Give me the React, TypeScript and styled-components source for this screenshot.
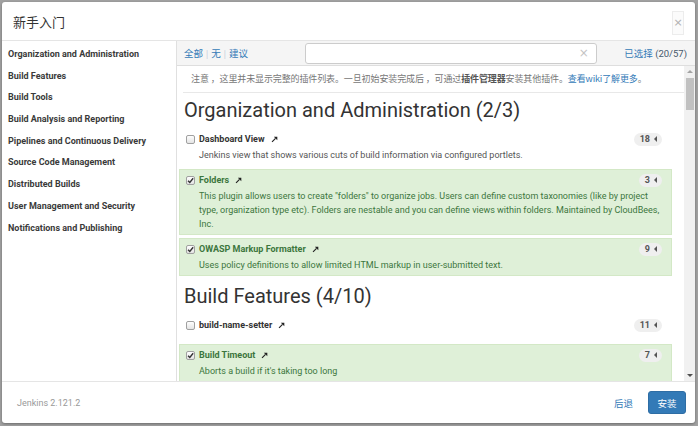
import React from "react";
import styled, { createGlobalStyle } from "styled-components";

const Global = createGlobalStyle`
  html, body { margin: 0; padding: 0; }
  body {
    background: #a2a2a2;
    font-family: Roboto, "Noto Sans CJK SC", sans-serif;
    color: #333;
  }
  * { box-sizing: border-box; }
`;

const Page = styled.div`
  width: 698px;
  height: 426px;
  padding: 2px 3px 3px 2px;
`;

const Modal = styled.div`
  height: 421px;
  background: #fff;
  border-radius: 3px;
  display: flex;
  flex-direction: column;
  overflow: hidden;
  box-shadow: 0 1px 3px rgba(0, 0, 0, 0.35);
`;

const Header = styled.div`
  height: 39px;
  flex: none;
  border-bottom: 1px solid #e5e5e5;
  display: flex;
  align-items: center;
  justify-content: space-between;
  padding: 0 11px 0 11px;
`;

const Title = styled.h4`
  margin: 0;
  font-size: 13px;
  font-weight: 400;
  color: #333;
  font-family: "Noto Sans CJK SC", sans-serif;
`;

const Close = styled.button`
  width: 12px;
  height: 24px;
  padding: 0;
  border: 1px solid #ececec;
  background: #fbfbfb;
  color: #b0b0b0;
  font-size: 11px;
  line-height: 20px;
  font-family: "DejaVu Sans", sans-serif;
  margin-top: 3px;
`;

const Body = styled.div`
  height: 340px;
  flex: none;
  display: flex;
`;

const Sidebar = styled.ul`
  list-style: none;
  margin: 0;
  padding: 3px 0 0 0;
  width: 175px;
  flex: none;
  border-right: 1px solid #e0e0e0;
`;

const NavItem = styled.li`
  height: 21.7px;
  line-height: 21.7px;
  padding-left: 6px;
  font-size: 9px;
  font-weight: 700;
  color: #3a3a3a;
  white-space: nowrap;
`;

const Main = styled.div`
  flex: 1;
  display: flex;
  flex-direction: column;
  min-width: 0;
`;

const Toolbar = styled.div`
  height: 25px;
  flex: none;
  background: #f5f5f5;
  border-bottom: 1px solid #dedede;
  display: flex;
  align-items: center;
  padding: 0 7px;
`;

const Links = styled.div`
  display: flex;
  align-items: center;
  gap: 3px;
  font-size: 9.5px;
  font-family: "Noto Sans CJK SC", sans-serif;
`;

const Link = styled.a`
  color: #337ab7;
  text-decoration: none;
`;

const Sep = styled.span`
  color: #b8c6d4;
  font-size: 8px;
`;

const Search = styled.div`
  margin-left: 57px;
  width: 292px;
  height: 21px;
  border: 1px solid #ccc;
  border-radius: 3px;
  background: #fff;
  display: flex;
  align-items: center;
  justify-content: flex-end;
  padding-right: 7px;
  color: #c4c4c4;
  font-size: 12px;
  font-family: "DejaVu Sans", sans-serif;
`;

const Selected = styled.div`
  margin-left: auto;
  font-size: 9.5px;
  font-family: Roboto, "Noto Sans CJK SC", sans-serif;
  color: #337ab7;
  padding-right: 1px;
`;

const Count = styled.span`
  color: #46596b;
`;

const ScrollWrap = styled.div`
  flex: 1;
  display: flex;
  min-height: 0;
`;

const Content = styled.div`
  flex: 1;
  overflow: hidden;
  min-width: 0;
`;

const Notice = styled.p`
  height: 27px;
  margin: 0 0 0 6px;
  border-bottom: 1px solid #e8e8e8;
  line-height: 26px;
  padding-left: 8px;
  font-size: 9px;
  letter-spacing: -0.12px;
  color: #777;
  font-family: "Noto Sans CJK SC", sans-serif;
  white-space: nowrap;
`;

const Strong = styled.b`
  color: #555;
`;

const Heading = styled.h2`
  margin: 5px 0 6px 7px;
  font-size: 20px;
  line-height: 24px;
  font-weight: 400;
  color: #333;
`;

const Card = styled.div<{ $on?: boolean }>`
  margin: 0 12px 3px 2px;
  padding: 1px 9px 3px 6px;
  border: 1px solid ${(p) => (p.$on ? "#d3e8c6" : "transparent")};
  background: ${(p) => (p.$on ? "#dff0d8" : "transparent")};
  color: ${(p) => (p.$on ? "#3c763d" : "#555")};
  & + h2 {
    margin-top: 8px;
  }
`;

const CardHead = styled.div`
  height: 18px;
  display: flex;
  align-items: center;
`;

const Box = styled.span`
  width: 9px;
  height: 9px;
  border: 1px solid #a0a0a0;
  border-radius: 2px;
  background: linear-gradient(#fefefe, #e4e4e4);
  display: inline-flex;
  align-items: center;
  justify-content: center;
  flex: none;
  margin-right: 4px;
`;

const Name = styled.span<{ $on?: boolean }>`
  font-size: 9px;
  font-weight: 700;
  color: ${(p) => (p.$on ? "#3c763d" : "#333")};
  margin-right: 6px;
`;

const Badge = styled.span`
  margin-left: auto;
  height: 13px;
  padding: 0 5px 0 6px;
  border-radius: 7px;
  background: #efefef;
  display: inline-flex;
  align-items: center;
  gap: 4px;
  font-size: 9px;
  font-weight: 700;
  color: #555;
`;

const Caret = styled.span`
  width: 0;
  height: 0;
  border-top: 3px solid transparent;
  border-bottom: 3px solid transparent;
  border-right: 3px solid #555;
`;

const Desc = styled.div<{ $empty?: boolean }>`
  padding-left: 13px;
  font-size: 9px;
  line-height: 14px;
  min-height: ${(p) => (p.$empty ? "3px" : "14px")};
`;

const ScrollBar = styled.div`
  width: 11px;
  flex: none;
  background: #f1f1f1;
  display: flex;
  flex-direction: column;
  align-items: center;
`;

const Arrow = styled.div<{ $down?: boolean }>`
  height: 11px;
  flex: none;
  display: flex;
  align-items: center;
  justify-content: center;
  &::before {
    content: "";
    width: 0;
    height: 0;
    border-left: 3px solid transparent;
    border-right: 3px solid transparent;
    ${(p) =>
      p.$down
        ? "border-top: 3px solid #505050;"
        : "border-bottom: 3px solid #a3a3a3;"}
  }
`;

const Track = styled.div`
  flex: 1;
  width: 100%;
  display: flex;
  justify-content: center;
`;

const Thumb = styled.div`
  width: 8px;
  height: 32px;
  margin-top: 1px;
  background: #c1c1c1;
`;

const Footer = styled.div`
  flex: 1;
  border-top: 1px solid #e5e5e5;
  display: flex;
  align-items: center;
  padding: 0 9px 0 15px;
`;

const Version = styled.span`
  font-size: 9px;
  color: #999;
`;

const Back = styled.a`
  margin-left: auto;
  margin-right: 15px;
  font-size: 9.5px;
  color: #337ab7;
  font-family: "Noto Sans CJK SC", sans-serif;
`;

const Install = styled.button`
  width: 38px;
  height: 23px;
  border: 1px solid #2e6da4;
  background: #337ab7;
  color: #fff;
  border-radius: 3px;
  font-size: 9.5px;
  font-family: "Noto Sans CJK SC", sans-serif;
  padding: 0;
`;

const Check = () => (
  <svg width="7" height="7" viewBox="0 0 10 10">
    <path d="M1.5 5.2 L4 7.8 L8.8 1.8" fill="none" stroke="#333" strokeWidth="2" />
  </svg>
);

const Ext = () => (
  <svg width="7" height="7" viewBox="0 0 10 10">
    <path d="M1.5 8.5 L6.5 3.5" stroke="#222" strokeWidth="1.6" />
    <polygon points="4,1 9,1 9,6" fill="#222" />
  </svg>
);

type Plugin = { name: string; on: boolean; deps: number; desc: string };

const Plug = ({ p }: { p: Plugin }) => (
  <Card $on={p.on}>
    <CardHead>
      <Box>{p.on && <Check />}</Box>
      <Name $on={p.on}>{p.name}</Name>
      <Ext />
      <Badge>
        {p.deps}
        <Caret />
      </Badge>
    </CardHead>
    <Desc $empty={!p.desc}>{p.desc}</Desc>
  </Card>
);

const sections: { title: string; plugins: Plugin[] }[] = [
  {
    title: "Organization and Administration (2/3)",
    plugins: [
      {
        name: "Dashboard View",
        on: false,
        deps: 18,
        desc: "Jenkins view that shows various cuts of build information via configured portlets.",
      },
      {
        name: "Folders",
        on: true,
        deps: 3,
        desc:
          'This plugin allows users to create "folders" to organize jobs. Users can define custom taxonomies (like by project type, organization type etc). Folders are nestable and you can define views within folders. Maintained by CloudBees, Inc.',
      },
      {
        name: "OWASP Markup Formatter",
        on: true,
        deps: 9,
        desc: "Uses policy definitions to allow limited HTML markup in user-submitted text.",
      },
    ],
  },
  {
    title: "Build Features (4/10)",
    plugins: [
      { name: "build-name-setter", on: false, deps: 11, desc: "" },
      { name: "Build Timeout", on: true, deps: 7, desc: "Aborts a build if it's taking too long" },
    ],
  },
];

const nav = [
  "Organization and Administration",
  "Build Features",
  "Build Tools",
  "Build Analysis and Reporting",
  "Pipelines and Continuous Delivery",
  "Source Code Management",
  "Distributed Builds",
  "User Management and Security",
  "Notifications and Publishing",
];

export default function App() {
  return (
    <>
      <Global />
      <Page>
        <Modal>
          <Header>
            <Title>新手入门</Title>
            <Close>×</Close>
          </Header>
          <Body>
            <Sidebar>
              {nav.map((n) => (
                <NavItem key={n}>{n}</NavItem>
              ))}
            </Sidebar>
            <Main>
              <Toolbar>
                <Links>
                  <Link>全部</Link>
                  <Sep>|</Sep>
                  <Link>无</Link>
                  <Sep>|</Sep>
                  <Link>建议</Link>
                </Links>
                <Search>×</Search>
                <Selected>
                  已选择 <Count>(20/57)</Count>
                </Selected>
              </Toolbar>
              <ScrollWrap>
                <Content>
                  <Notice>
                    注意 ，这里并未显示完整的插件列表。一旦初始安装完成后 ，可通过<Strong>插件管理器</Strong>安装其他插件。
                    <Link>查看wiki了解更多</Link>。
                  </Notice>
                  {sections.map((s) => (
                    <React.Fragment key={s.title}>
                      <Heading>{s.title}</Heading>
                      {s.plugins.map((p) => (
                        <Plug key={p.name} p={p} />
                      ))}
                    </React.Fragment>
                  ))}
                </Content>
                <ScrollBar>
                  <Arrow />
                  <Track>
                    <Thumb />
                  </Track>
                  <Arrow $down />
                </ScrollBar>
              </ScrollWrap>
            </Main>
          </Body>
          <Footer>
            <Version>Jenkins 2.121.2</Version>
            <Back>后退</Back>
            <Install>安装</Install>
          </Footer>
        </Modal>
      </Page>
    </>
  );
}
